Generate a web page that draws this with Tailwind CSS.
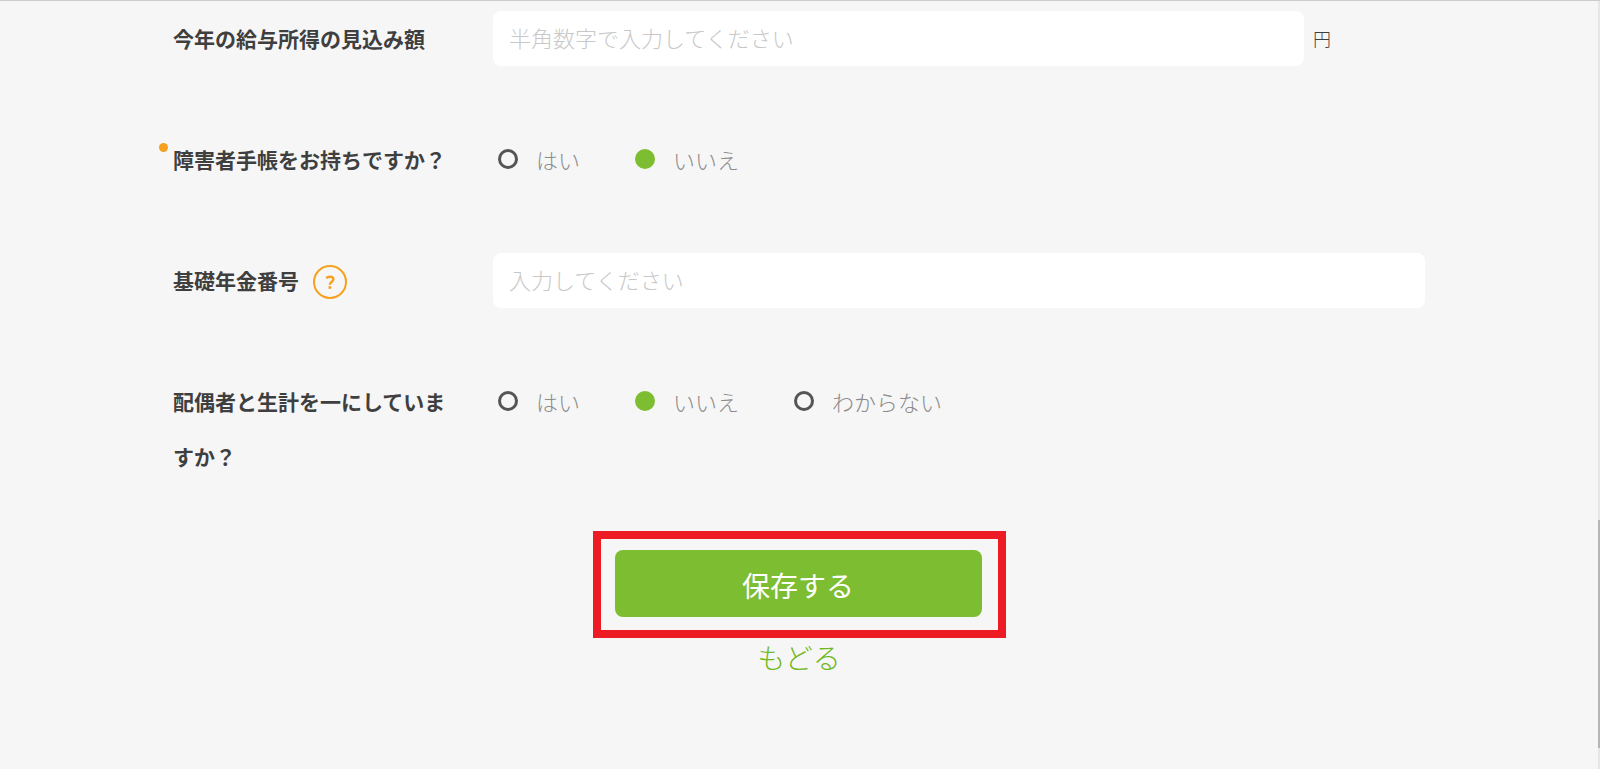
<!DOCTYPE html>
<html lang="ja">
<head>
  <meta charset="UTF-8" />
  <meta name="viewport" content="width=device-width, initial-scale=1.0"/>
  <title>従業員情報の入力</title>
  <script src="https://cdn.jsdelivr.net/npm/@tailwindcss/browser@4"></script>
</head>
<body class="relative min-h-screen pr-0.5 overflow-hidden bg-[#f6f6f6] border-t border-[#cccccc] font-['Noto_Sans_CJK_JP',sans-serif] text-[#3f3f3f]">
  <form class="max-w-[1252px] mx-auto pt-[10px]">
    <div class="flex flex-col gap-[66px]">

      <!-- 見込み額 -->
      <div class="flex">
        <label for="income" class="w-72 mr-8 shrink-0 text-[21px] leading-[55px] font-bold">今年の給与所得の見込み額</label>
        <input type="text" id="income" placeholder="半角数字で入力してください" class="flex-1 min-w-0 h-[55px] px-4 pb-1 rounded-lg bg-white text-[22px] font-light placeholder:text-[#c8c8c8]" />
        <span class="w-[121px] pl-[9px] text-lg leading-[55px] font-light">円</span>
      </div>

      <!-- 障害者手帳 -->
      <fieldset class="flex" aria-labelledby="techo">
        <p id="techo" class="relative w-72 mr-8 shrink-0 text-[21px] leading-[55px] font-bold">
          <span class="absolute -left-[14px] top-[11px] size-[9px] rounded-full bg-[#f5a11d]"></span>障害者手帳をお持ちですか？
        </p>
        <div class="flex items-center gap-[55px] h-[54px] pl-[5px] text-[22px] font-light text-[#8c8c8c]">
          <label class="flex items-center gap-[18px]"><input type="radio" name="techo" value="yes" class="appearance-none size-5 rounded-full border-[3px] border-[#555555] checked:border-[#7dbd31] checked:bg-[#7dbd31]" />はい</label>
          <label class="flex items-center gap-[18px]"><input type="radio" name="techo" value="no" checked class="appearance-none size-5 rounded-full border-[3px] border-[#555555] checked:border-[#7dbd31] checked:bg-[#7dbd31]" />いいえ</label>
        </div>
      </fieldset>

      <!-- 基礎年金番号 -->
      <div class="flex">
        <div class="flex items-center w-72 mr-8 shrink-0">
          <label for="nenkin" class="text-[21px] leading-[55px] font-bold">基礎年金番号</label>
          <button type="button" aria-label="ヘルプ" class="mt-0.5 ml-[14px] size-[34px] rounded-full border-2 border-[#f5a11d] text-[#f5a11d]">
            <svg viewBox="0 0 30 30" class="size-[30px]" fill="none" stroke="currentColor" stroke-width="2.4">
              <path d="M11.2 11.2C12.4 10 13.6 9.7 14.9 9.7C17.1 9.7 18.4 10.6 18.4 12.2C18.4 14.7 14.9 14.8 14.9 17.8"/>
              <path d="M13.5 20.5H16.3" stroke-width="2.6"/>
            </svg>
          </button>
        </div>
        <input type="text" id="nenkin" placeholder="入力してください" class="flex-1 min-w-0 h-[55px] px-4 pb-1 rounded-lg bg-white text-[22px] font-light placeholder:text-[#c8c8c8]" />
      </div>

      <!-- 配偶者と生計 -->
      <fieldset class="flex" aria-labelledby="seikei">
        <p id="seikei" class="w-72 mr-8 shrink-0 text-[21px] leading-[55px] font-bold">配偶者と生計を一にしていますか？</p>
        <div class="flex items-center gap-[55px] h-[54px] pl-[5px] text-[22px] font-light text-[#8c8c8c]">
          <label class="flex items-center gap-[18px]"><input type="radio" name="seikei" value="yes" class="appearance-none size-5 rounded-full border-[3px] border-[#555555] checked:border-[#7dbd31] checked:bg-[#7dbd31]" />はい</label>
          <label class="flex items-center gap-[18px]"><input type="radio" name="seikei" value="no" checked class="appearance-none size-5 rounded-full border-[3px] border-[#555555] checked:border-[#7dbd31] checked:bg-[#7dbd31]" />いいえ</label>
          <label class="flex items-center gap-[18px]"><input type="radio" name="seikei" value="unknown" class="appearance-none size-5 rounded-full border-[3px] border-[#555555] checked:border-[#7dbd31] checked:bg-[#7dbd31]" />わからない</label>
        </div>
      </fieldset>
    </div>

    <!-- ボタン -->
    <div class="flex flex-col items-center mt-[47px]">
      <div class="border-8 border-[#ed1c24] pl-[14px] pr-4 pt-[11px] pb-[13px]">
        <button type="submit" class="block w-[367px] h-[67px] pt-0.5 rounded-lg bg-[#7dbd31] text-[28px] text-white">保存する</button>
      </div>
      <a href="#" class="text-[28px] leading-[38px] font-light text-[#6fb81f]">もどる</a>
    </div>
  </form>

  <!-- スクロールバー -->
  <div class="absolute inset-y-0 right-0 w-0.5 bg-[#e6e6e6]">
    <div class="absolute top-[519px] bottom-[21px] w-full bg-[#b5b5b5]"></div>
  </div>
</body>
</html>
